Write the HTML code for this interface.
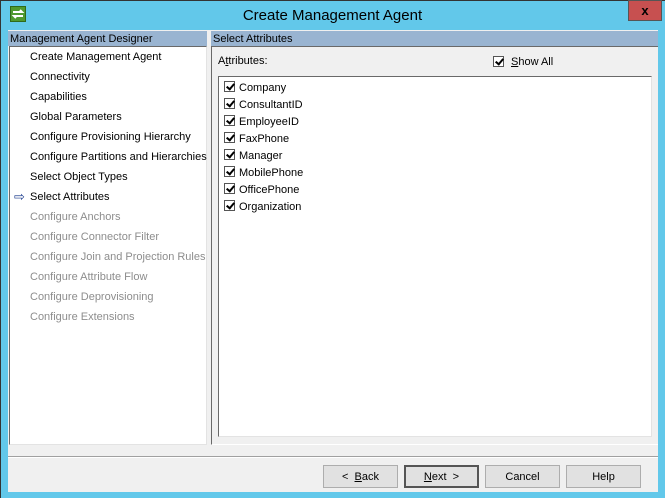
<!DOCTYPE html>
<html><head><style>
*{margin:0;padding:0;box-sizing:border-box}
body{width:665px;height:498px;overflow:hidden;background:#62c8ea;font-family:"Liberation Sans",sans-serif;font-size:11px;color:#000;position:relative}
.a{position:absolute}
.title{left:0;top:0;width:665px;text-align:center;font-size:15px;line-height:32px;color:#000}
.hdr{background:#99b4d1;height:15px;line-height:16px;padding-left:2px;font-size:11px}
.it{position:absolute;left:30px;font-size:11px;white-space:nowrap;margin-top:1px}
.g{color:#8d8d8d}
.cb{position:absolute;width:11px;height:11px;border:1px solid #555;background:#fff}
.cb::after{content:"";position:absolute;left:3px;top:0px;width:3px;height:6px;border:solid #000;border-width:0 2px 2px 0;transform:rotate(40deg)}
.at{position:absolute;left:239px;font-size:11px;margin-top:1px}
.btn{position:absolute;top:465px;width:75px;height:23px;background:#e1e1e1;border:1px solid #adadad;text-align:center;line-height:22px;font-size:11px}
</style></head><body>
<div class="a" style="left:0;top:0;width:665px;height:1px;background:#333"></div>
<div class="a" style="left:0;top:0;width:1px;height:498px;background:#333"></div>
<div class="a" style="left:10px;top:6px;width:16px;height:16px;background:#4f9a2f;border:1px solid #2f6a1a"><svg width="14" height="14" viewBox="0 0 14 14"><path d="M2 5h9l-2-2M12 9H3l2 2" stroke="#fff" stroke-width="2" fill="none"/></svg></div>
<div class="a title">Create Management Agent</div>
<div class="a" style="left:628px;top:0;width:34px;height:21px;background:#c75050;border:1px solid #555;text-align:center;line-height:20px;font-weight:bold;font-size:13px">x</div>
<div class="a" style="left:8px;top:30px;width:650px;height:462px;background:#f0f0f0"></div>
<div class="a hdr" style="left:8px;top:31px;width:199px">Management Agent Designer</div>
<div class="a hdr" style="left:211px;top:31px;width:447px">Select Attributes</div>
<div class="a" style="left:9px;top:46px;width:198px;height:399px;background:#fff;border-left:1px solid #696969;border-top:1px solid #696969;border-right:1px solid #e3e3e3;border-bottom:1px solid #e3e3e3"></div>
<div class="it" style="top:50px">Create Management Agent</div>
<div class="it" style="top:70px">Connectivity</div>
<div class="it" style="top:90px">Capabilities</div>
<div class="it" style="top:110px">Global Parameters</div>
<div class="it" style="top:130px">Configure Provisioning Hierarchy</div>
<div class="it" style="top:150px">Configure Partitions and Hierarchies</div>
<div class="it" style="top:170px">Select Object Types</div>
<div class="a" style="left:14px;top:189px;font-size:13px;color:#1f3f8f">⇨</div>
<div class="it" style="top:190px">Select Attributes</div>
<div class="it g" style="top:210px">Configure Anchors</div>
<div class="it g" style="top:230px">Configure Connector Filter</div>
<div class="it g" style="top:250px">Configure Join and Projection Rules</div>
<div class="it g" style="top:270px">Configure Attribute Flow</div>
<div class="it g" style="top:290px">Configure Deprovisioning</div>
<div class="it g" style="top:310px">Configure Extensions</div>
<div class="a" style="left:211px;top:46px;width:447px;height:399px;border-left:1px solid #696969;border-top:1px solid #696969;border-bottom:1px solid #fff"></div>
<div class="a" style="left:218px;top:55px">A<u>t</u>tributes:</div>
<div class="cb" style="left:493px;top:56px"></div>
<div class="a" style="left:511px;top:56px"><u>S</u>how All</div>
<div class="a" style="left:218px;top:76px;width:434px;height:361px;background:#fff;border-left:1px solid #696969;border-top:1px solid #696969;border-right:1px solid #e3e3e3;border-bottom:1px solid #e3e3e3"></div>
<div class="cb" style="left:224px;top:81px"></div><div class="at" style="top:81px">Company</div>
<div class="cb" style="left:224px;top:98px"></div><div class="at" style="top:98px">ConsultantID</div>
<div class="cb" style="left:224px;top:115px"></div><div class="at" style="top:115px">EmployeeID</div>
<div class="cb" style="left:224px;top:132px"></div><div class="at" style="top:132px">FaxPhone</div>
<div class="cb" style="left:224px;top:149px"></div><div class="at" style="top:149px">Manager</div>
<div class="cb" style="left:224px;top:166px"></div><div class="at" style="top:166px">MobilePhone</div>
<div class="cb" style="left:224px;top:183px"></div><div class="at" style="top:183px">OfficePhone</div>
<div class="cb" style="left:224px;top:200px"></div><div class="at" style="top:200px">Organization</div>
<div class="a" style="left:8px;top:456px;width:650px;height:1px;background:#a0a0a0"></div>
<div class="a" style="left:8px;top:457px;width:650px;height:1px;background:#fff"></div>
<div class="btn" style="left:323px">&lt;&nbsp; <u>B</u>ack</div>
<div class="btn" style="left:404px;border:2px solid #555;line-height:20px"><u>N</u>ext &nbsp;&gt;</div>
<div class="btn" style="left:485px">Cancel</div>
<div class="btn" style="left:566px">Help</div>
</body></html>
